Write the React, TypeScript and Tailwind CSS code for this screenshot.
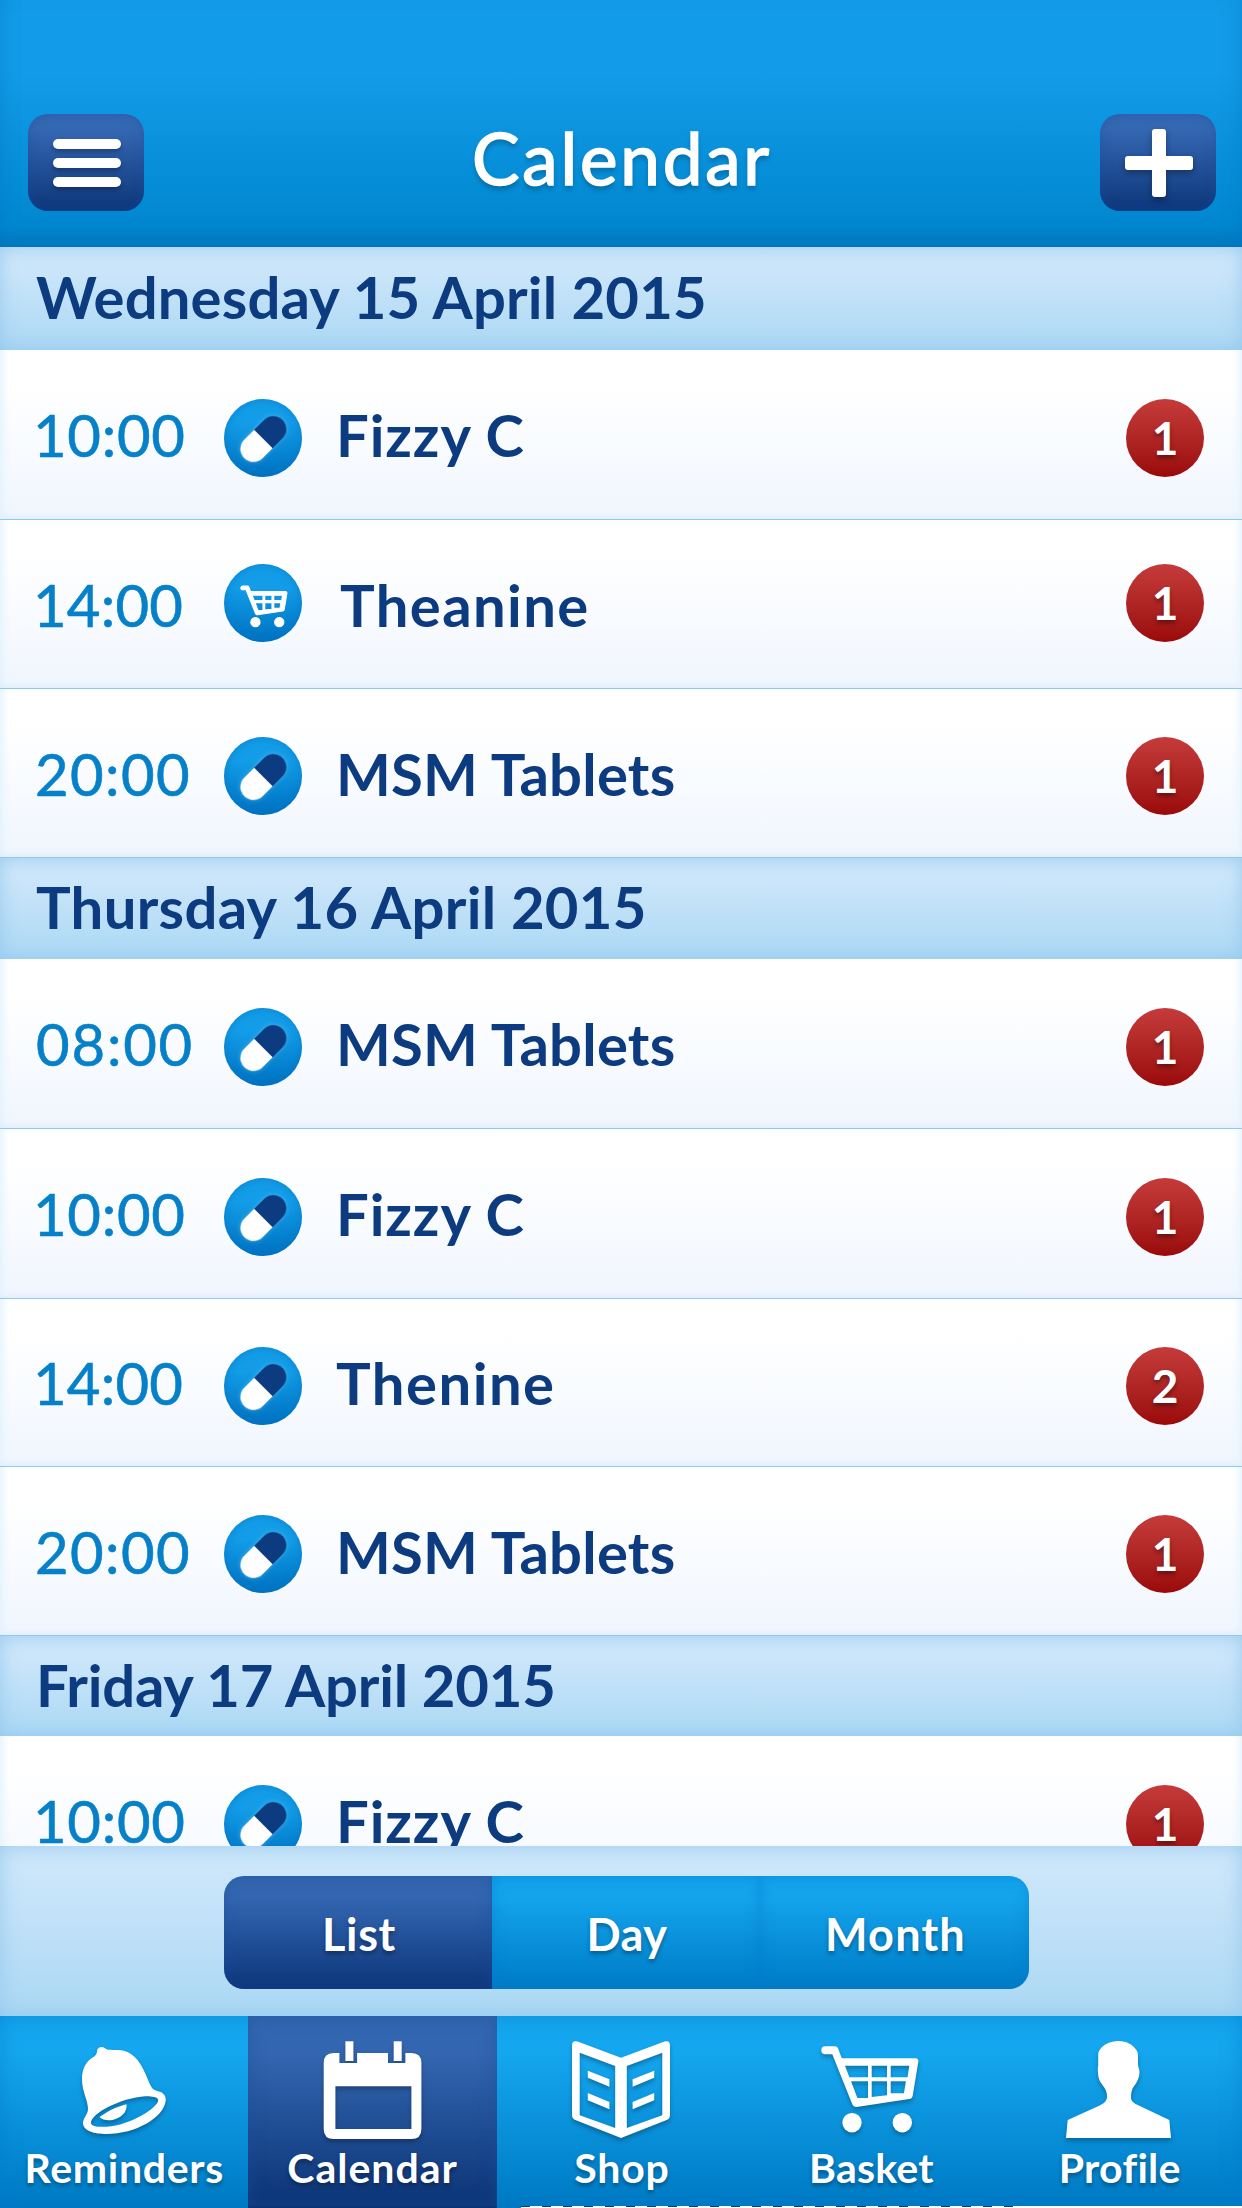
import { ReactNode } from 'react';

type Item = {
  time: string;
  timeClass: string;
  name: string;
  nameClass: string;
  kind: 'pill' | 'cart';
  count: number;
  rowClass: string;
  discClass?: string;
};

type Day = { title: string; headClass: string; items: Item[] };

const FIZZY = 'ml-[34px] tracking-[0.9px]';
const MSM = 'ml-[34px] tracking-[0.25px]';
const T10 = 'pl-[33px] tracking-[0.7px]';
const T14 = 'pl-[33px] tracking-[0.2px]';
const T20 = 'pl-[35px] tracking-[1.4px]';

const days: Day[] = [
  {
    title: 'Wednesday 15 April 2015',
    headClass: 'h-[103px] tracking-[0.15px]',
    items: [
      { time: '10:00', timeClass: T10, name: 'Fizzy C', nameClass: FIZZY, kind: 'pill', count: 1, rowClass: 'h-[170px]' },
      { time: '14:00', timeClass: T14, name: 'Theanine', nameClass: 'ml-[38px] tracking-[1.4px]', kind: 'cart', count: 1, rowClass: 'h-[169px]', discClass: '-mt-[8px]' },
      { time: '20:00', timeClass: T20, name: 'MSM Tablets', nameClass: MSM, kind: 'pill', count: 1, rowClass: 'h-[169px]' },
    ],
  },
  {
    title: 'Thursday 16 April 2015',
    headClass: 'h-[101px] tracking-[0.33px]',
    items: [
      { time: '08:00', timeClass: 'pl-[36px] tracking-[1.8px]', name: 'MSM Tablets', nameClass: MSM, kind: 'pill', count: 1, rowClass: 'h-[170px]' },
      { time: '10:00', timeClass: T10, name: 'Fizzy C', nameClass: FIZZY, kind: 'pill', count: 1, rowClass: 'h-[170px]' },
      { time: '14:00', timeClass: T14, name: 'Thenine', nameClass: 'ml-[34px] tracking-[1.5px]', kind: 'pill', count: 2, rowClass: 'h-[168px]' },
      { time: '20:00', timeClass: T20, name: 'MSM Tablets', nameClass: MSM, kind: 'pill', count: 1, rowClass: 'h-[169px]' },
    ],
  },
  {
    title: 'Friday 17 April 2015',
    headClass: 'h-[100px] tracking-[-0.2px]',
    items: [
      { time: '10:00', timeClass: T10, name: 'Fizzy C', nameClass: FIZZY, kind: 'pill', count: 1, rowClass: 'h-[170px]' },
    ],
  },
];

function CartShape() {
  return (
    <>
      <path
        fillRule="evenodd"
        d="M11.3 6.3H21q2.2 0 3 2l3.8 10h73.5q3.5 0 3 3.5l-5.6 34q-.5 3-3.5 3.3L42.5 66.9q-3 .4-4.2-2.6L18.3 14.3h-7a4 4 0 0 1 0-8ZM31 25.7l4.4 11.6H54V25.7ZM57.7 25.7v11.6H73V25.7ZM76.7 25.7v11.6h16.8l1.8-11.6ZM37 41.3 43.4 58H54V41.3ZM57.7 41.3V57L73 55.3v-14ZM76.7 41.3v12h13.2l2-12Z"
      />
      <circle cx="38" cy="82.7" r="9.7" />
      <circle cx="88.3" cy="82.7" r="9.7" />
    </>
  );
}

function PillIcon() {
  return (
    <svg viewBox="0 0 78 78" className="h-full w-full">
      <g transform="translate(39.4 40) rotate(45)" className="drop-shadow-[0_0_2px_#ffffff40]">
        <path d="M-13 0h26v14a13 13 0 0 1-26 0Z" fill="#fff" />
        <path d="M-13 0h26v-14a13 13 0 0 0-26 0Z" fill="#0d3b80" />
      </g>
    </svg>
  );
}

function CartIcon() {
  return (
    <svg viewBox="0 0 78 78" className="h-full w-full">
      <g transform="translate(13.4 19) scale(.474)" fill="#fff" stroke="#fff" strokeWidth="2.4">
        <CartShape />
      </g>
    </svg>
  );
}

function Row({ item }: { item: Item }) {
  return (
    <div
      className={`flex shrink-0 items-center border-b border-[#8ccbe9] bg-linear-to-b from-white from-20% to-[#f0f6fe] pt-[6px] pr-[38px] shadow-[inset_10px_0_10px_-8px_#dff1fe,inset_-10px_0_10px_-8px_#dff1fe,inset_0_-8px_8px_-8px_#d9e8f8] ${item.rowClass}`}
    >
      <span className={`-mt-[6px] w-[224px] text-[58px] text-[#0580c9] [-webkit-text-stroke:0.6px_#0580c9] ${item.timeClass}`}>{item.time}</span>
      <span
        className={`h-[78px] w-[78px] shrink-0 overflow-hidden rounded-full bg-linear-to-b from-[#139de8] from-30% to-[#0072c1] shadow-[inset_0_0_10px_#0072c199] ${item.discClass ?? ''}`}
      >
        {item.kind === 'pill' ? <PillIcon /> : <CartIcon />}
      </span>
      <span className={`-mt-[6px] flex-1 text-[58px] font-bold text-[#0d3b80] ${item.nameClass}`}>{item.name}</span>
      <span
        className={`flex h-[78px] w-[78px] items-center justify-center rounded-full bg-linear-to-b from-[#c53b3b] to-[#9a0808] pb-px text-[46px] font-bold text-white text-shadow-[0_3px_4px_#0006] ${item.discClass ?? ''}`}
      >
        {item.count}
      </span>
    </div>
  );
}

type TabProps = { label: string; labelClass: string; active?: boolean; children: ReactNode };

function Tab({ label, labelClass, active, children }: TabProps) {
  return (
    <a
      className={`flex w-1/5 flex-col items-center pt-[24px] ${
        active ? 'bg-linear-to-b from-[#3366b0] from-20% to-[#0b3476] shadow-[inset_0_0_16px_#1b4f9c80]' : ''
      }`}
    >
      <svg viewBox="0 0 110 104" className="h-[104px] w-[110px] shrink-0 drop-shadow-[0_3px_2px_#0004]" fill="#fff">
        {children}
      </svg>
      <span className={`-mt-[1px] text-[41px] leading-[50px] font-bold text-white text-shadow-[0_3px_4px_#0005] ${labelClass}`}>{label}</span>
    </a>
  );
}

export default function App() {
  return (
    <div className="flex h-[2208px] w-[1242px] flex-col overflow-hidden bg-white font-['Lato',sans-serif] whitespace-nowrap">
      {/* Header */}
      <header className="flex h-[247px] shrink-0 items-start justify-between bg-linear-to-b from-[#129be8] from-30% via-[#0087cf] via-92% to-[#007ac1] pt-[114px] pr-[26px] pl-[28px] text-white shadow-[inset_12px_-20px_20px_-14px_#0072be80,inset_-12px_0_20px_-14px_#0072be80]">
        <button className="flex h-[97px] w-[116px] flex-col items-center justify-center gap-[9px] rounded-[20px] bg-linear-to-b from-[#3568b2] from-15% to-[#0c367b] pt-[1px] pl-[2px] shadow-[inset_0_0_10px_#1b4b9c80]">
          <span className="h-[10px] w-[68px] rounded-full bg-white shadow-[0_3px_4px_#0004]" />
          <span className="h-[10px] w-[68px] rounded-full bg-white shadow-[0_3px_4px_#0004]" />
          <span className="h-[10px] w-[68px] rounded-full bg-white shadow-[0_3px_4px_#0004]" />
        </button>
        <h1 className="text-[71px] leading-[88px] tracking-[2.8px] text-shadow-[0_4px_5px_#0004] [-webkit-text-stroke:1.6px_white]">Calendar</h1>
        <button className="flex h-[97px] w-[116px] items-center justify-center rounded-[20px] bg-linear-to-b from-[#3568b2] from-15% to-[#0c367b] pt-[1px] pl-[2px] shadow-[inset_0_0_10px_#1b4b9c80]">
          <svg viewBox="0 0 68 68" className="h-[68px] w-[68px] drop-shadow-[0_3px_3px_#0005]" fill="#fff">
            <rect x="27" y="0" width="14" height="68" rx="3" />
            <rect x="0" y="27" width="68" height="14" rx="3" />
          </svg>
        </button>
      </header>

      {/* Day list */}
      <main className="flex h-[1599px] shrink-0 flex-col overflow-hidden">
        {days.map((day) => (
          <section key={day.title}>
            <h2
              className={`flex items-center bg-linear-to-b from-[#cce6fa] from-20% to-[#abd8f4] pb-[4px] pl-[36px] text-[58px] font-bold text-[#0d3b80] shadow-[inset_0_0_18px_#8fc4eecc] ${day.headClass}`}
            >
              {day.title}
            </h2>
            {day.items.map((item) => (
              <Row key={item.time} item={item} />
            ))}
          </section>
        ))}
      </main>

      {/* View switch */}
      <div className="flex h-[170px] shrink-0 bg-linear-to-b from-[#cce6fa] from-15% to-[#abd8f4] pt-[30px] pl-[224px] shadow-[inset_0_0_20px_#8fc4eecc]">
        <div className="flex h-[113px] w-[805px] overflow-hidden rounded-[20px] text-[45px] font-bold text-white text-shadow-[0_3px_4px_#0005]">
          <span className="flex w-[268px] items-center justify-center bg-linear-to-b from-[#3366b0] from-20% to-[#0c367b] pt-[4px] pl-[2px] tracking-[0.7px] shadow-[inset_0_0_14px_#1b4b9c80]">List</span>
          <span className="flex w-[268px] items-center justify-center bg-linear-to-b from-[#13a4ec] from-20% to-[#007bc6] pt-[4px] pl-[2px] tracking-[0.5px] shadow-[inset_0_0_14px_#0078cc80]">Day</span>
          <span className="flex flex-1 items-center justify-center bg-linear-to-b from-[#13a4ec] from-20% to-[#007bc6] pt-[4px] pl-[2px] tracking-[1.2px] shadow-[inset_0_0_14px_#0078cc80]">Month</span>
        </div>
      </div>

      {/* Tab bar */}
      <nav className="flex h-[190px] shrink-0 bg-linear-to-b from-[#14a6ee] from-20% to-[#007ac4] shadow-[inset_0_0_20px_#0078cc80]">
        <Tab label="Reminders" labelClass="tracking-[0.7px]">
          <path
            fillRule="evenodd"
            d="M28 11.5C28 8.5 30 7 32.7 7c2.5 0 3.5 1.500 5.5 2.500 2 .6 9 .2 14 .7 7 .9 12.500 5 16.500 10 7.500 10 10 20.500 14 27.300 2.500 3.500 7 3.500 10 5 3 2 4.400 4.700 4 8-1.500 17-30.500 33.500-59 33.500-12.500 0-23.700-3-23.700-11 0-5 5-8.500 5-14 0-9-6-17-6-30 0-9 3-14.500 6.500-18.300 3.500-3.500 8-4 8.500-9.200ZM89 59.300C87.500 56.700 81 56 74 56.500 53 58 22 73 22 83c0 3.500 8 4.200 16 3.700C62 85.500 92 66 89 59.300Z"
          />
          <path d="M57.5 64.3C48 66.5 38.5 71.5 30.5 77c3 3 8 3.8 13 2.9 8.5-1.6 15-7.9 14-15.6Z" />
        </Tab>
        <Tab label="Calendar" labelClass="tracking-[1px]" active>
          <path fillRule="evenodd" d="M15.7 13h5.700v10h17.700V13H70v10h17.400V13h6q10 0 10 10v66q0 10-10 10H15.700q-10 0-10-10V23q0-10 10-10ZM17.400 46.300V89h76V46.300Z" />
          <rect x="27.4" y="1.3" width="8" height="19.7" />
          <rect x="75.7" y="1.3" width="8" height="19.7" />
        </Tab>
        <Tab label="Shop" labelClass="pl-[2px] tracking-[0.8px]">
          <path
            fillRule="evenodd"
            d="M6 5.500Q6 0 11.500 1.500L55 17.700 98.500 1.500Q104 0 104 5.500V75q0 3.500-3.300 5L55 98 9.300 80Q6 78.500 6 75ZM13.700 12.700v62.600L49.200 88V26ZM96.300 12.700 60.800 26v62l35.500-12.700Z"
          />
          <path d="m21.8 30.7 21.600 8.600v7.400l-21.600-9ZM21.8 53l21.600 9v7.300l-21.600-9ZM88.2 30.7l-21.600 8.600v7.400l21.600-9ZM88.2 53l-21.600 9v7.300l21.600-9Z" />
        </Tab>
        <Tab label="Basket" labelClass="pl-[4px] tracking-[0.2px]">
          <CartShape />
        </Tab>
        <Tab label="Profile" labelClass="pl-[4px] tracking-[0.3px]">
          <path d="M55.5 1C47 1 40 5 37 9.5c-2 2.5-1.800 4-1.800 7v9c-.7 3-.4 7 .3 11.500 1.200 5.500 4.500 8 6.700 12 1.600 3 2.300 7 1.500 10-1.200 3.200-4 5-7 6.500L4.700 80 3 98h105l-1.700-18-32.600-15.500c-3-1.300-5.700-4-5.700-6.500 0-5 .5-8.500 2.800-11.500 3.400-4.300 5.700-9 5.700-14.500 0-3-1.500-4.500-1.500-7.500V16c0-3-.5-4.500-2-6.500C69.500 4.500 63.500 1 55.500 1Z" />
        </Tab>
      </nav>
      <div className="flex h-[2px] shrink-0">
        <div className="w-[521px] bg-[linear-gradient(90deg,#0078c2_248px,#0b3476_248px_497px,#0078c2_497px)]" />
        <div className="h-px w-[497px] bg-[repeating-linear-gradient(90deg,#0d3b80_0_9px,#ffffff_9px_21px)]" />
      </div>
    </div>
  );
}
